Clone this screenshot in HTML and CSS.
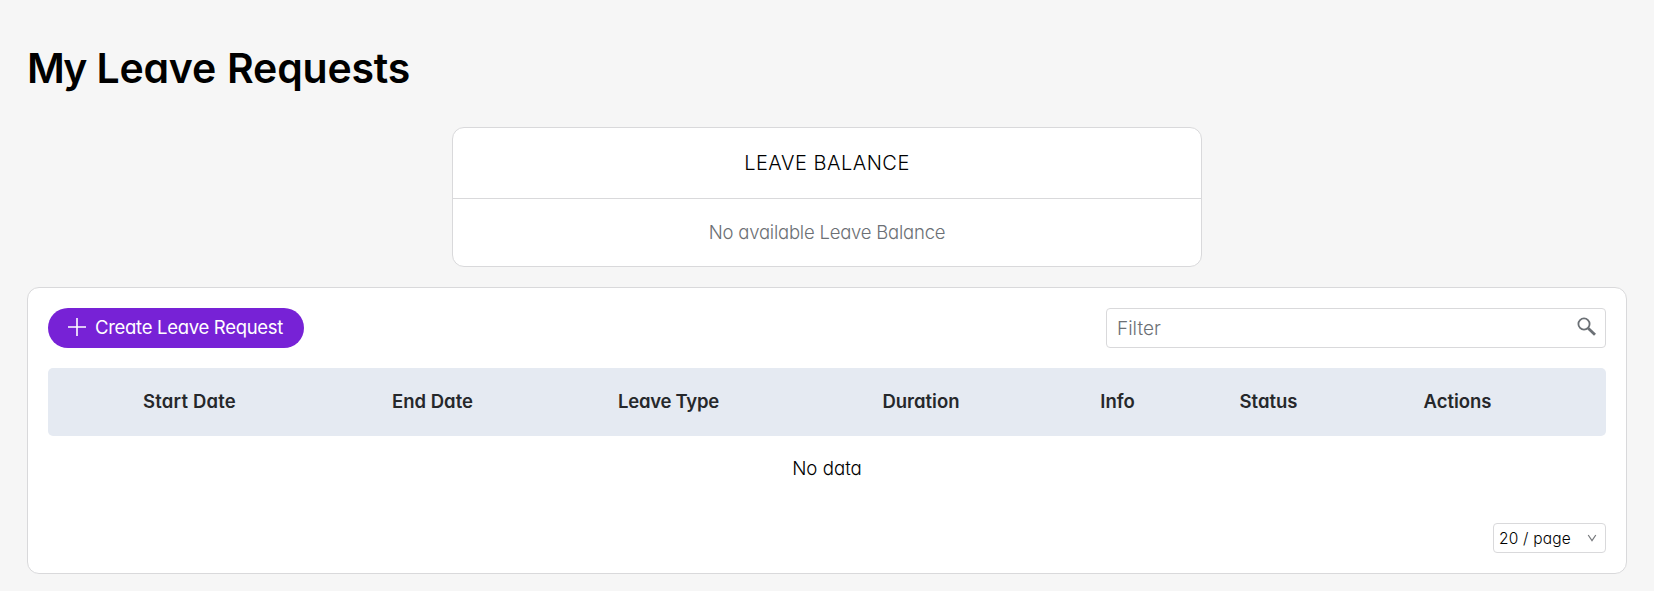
FILE: index.html
```html
<!DOCTYPE html>
<html lang="en">
<head>
<meta charset="utf-8">
<title>My Leave Requests</title>
<link rel="stylesheet" href="styles.css">
</head>
<body>
<main class="page">
  <h1 class="title"><span class="title-lead">My</span> Leave Requests</h1>
  <section class="balance">
    <h2 class="balance-title"><span>LEAVE BALANCE</span></h2>
    <p class="balance-empty"><span>No available Leave Balance</span></p>
  </section>
  <section class="requests">
    <div class="toolbar">
      <button class="create" type="button">
        <svg class="plus" viewBox="0 0 18 18"><path d="M9 0v18M0 9h18"/></svg>
        <span>Create Leave Request</span>
      </button>
      <div class="filter">
        <span class="filter-text">Filter</span>
        <svg class="search" viewBox="0 0 20 20"><circle cx="7" cy="7" r="5.6"/><path class="handle" d="M11.2 11.2L18 17.8"/></svg>
      </div>
    </div>
    <div class="table-head">
      <span class="th loose">Start Date</span>
      <span class="th">End Date</span>
      <span class="th tight">Leave Type</span>
      <span class="th">Duration</span>
      <span class="th">Info</span>
      <span class="th">Status</span>
      <span class="th">Actions</span>
    </div>
    <div class="no-data"><span>No data</span></div>
    <div class="pager">
      <div class="page-size">
        <span>20 / page</span>
        <svg class="chevron" viewBox="0 0 10 8"><path d="M1.2 1L5 6.6L8.8 1"/></svg>
      </div>
    </div>
  </section>
</main>
</body>
</html>
```
FILE: styles.css
```css
* { box-sizing: border-box; }
html { background: #f6f6f6; }
body {
  margin: 0;
  color: #000;
  font-family: Inter, "Open Sans", sans-serif;
  font-feature-settings: "cv11";
  font-weight: 300;
}
h1, h2, p { margin: 0; font-weight: inherit; }
.page { padding: 40px 27px 0; }
.title {
  height: 57px;
  margin-bottom: 30px;
  line-height: 57px;
  font-size: 41px;
  font-weight: 600;
  letter-spacing: -0.2px;
  word-spacing: 1px;
}
.title-lead { letter-spacing: -2px; }
.balance {
  width: 750px;
  height: 140px;
  margin: 0 auto 20px;
  background: #fff;
  border: 1px solid #d9d9db;
  border-radius: 12px;
  text-align: center;
}
.balance-title {
  height: 71px;
  line-height: 70px;
  border-bottom: 1px solid #d9d9db;
  font-size: 20px;
  letter-spacing: 0.5px;
}
.balance-empty {
  line-height: 67px;
  font-size: 18.5px;
  letter-spacing: -0.22px;
  color: #6c7075;
}
.requests {
  height: 287px;
  padding: 20px;
  background: #fff;
  border: 1px solid #d9d9db;
  border-radius: 12px;
}
.toolbar {
  display: flex;
  justify-content: space-between;
  height: 40px;
  margin-bottom: 20px;
}
.create {
  display: flex;
  align-items: center;
  gap: 9px;
  width: 256px;
  height: 40px;
  padding: 0 0 2px 20px;
  border: 0;
  border-radius: 20px;
  background: #7722d6;
  color: #fff;
  font: inherit;
  font-feature-settings: inherit;
  font-size: 18.5px;
  font-weight: 400;
  letter-spacing: -0.3px;
  white-space: nowrap;
}
.plus { width: 18px; height: 18px; flex: none; fill: none; stroke: #fff; stroke-width: 1.6; }
.filter {
  display: flex;
  align-items: center;
  justify-content: space-between;
  width: 500px;
  padding: 0 8px 0 10px;
  border: 1px solid #d9d9db;
  border-radius: 4px;
  font-size: 19px;
  color: #6c7075;
}
.search { width: 20px; height: 20px; margin-top: -2px; fill: none; stroke: #6b7075; stroke-width: 1.8; }
.handle { stroke-width: 2.8; }
.table-head {
  display: grid;
  grid-template-columns: 283px 203px 269px 236px 157px 145px 233px;
  height: 68px;
  line-height: 67px;
  border-radius: 5px;
  background: #e5eaf2;
  color: #26282b;
  font-size: 18.5px;
  font-weight: 600;
  text-align: center;
}
.loose { letter-spacing: 0.2px; }
.tight { letter-spacing: -0.25px; }
.no-data {
  height: 87px;
  line-height: 66px;
  text-align: center;
  font-size: 18.7px;
}
.pager { display: flex; justify-content: flex-end; }
.page-size {
  display: flex;
  align-items: center;
  justify-content: space-between;
  width: 113px;
  height: 30px;
  padding: 0 8px 0 5px;
  border: 1px solid #d9d9db;
  border-radius: 4px;
  font-size: 15.5px;
  letter-spacing: 0.2px;
  white-space: nowrap;
}
.chevron { width: 10px; height: 8px; fill: none; stroke: #77797d; stroke-width: 1.2; }
```
